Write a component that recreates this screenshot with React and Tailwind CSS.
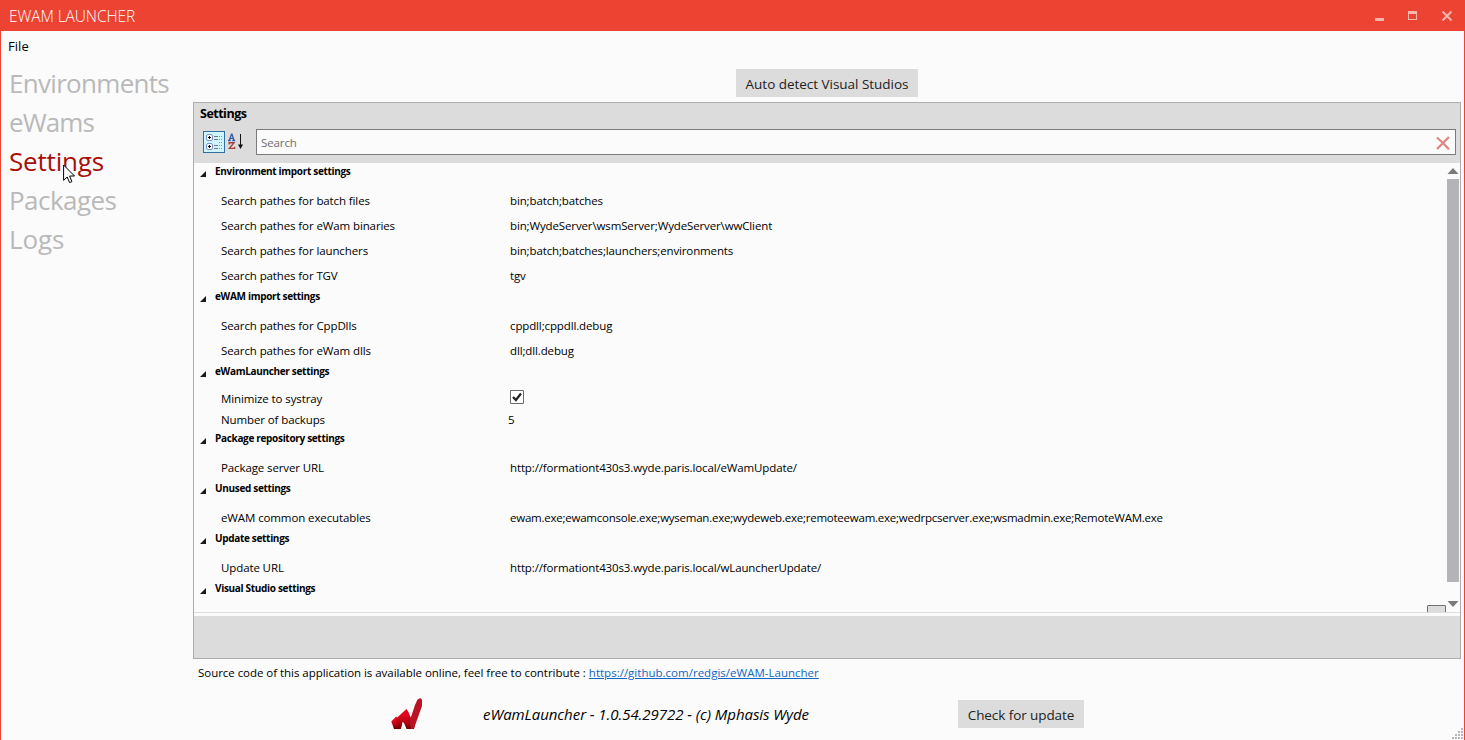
const NAV = [
  { label: 'Environments', track: 'tracking-[-0.7px]' },
  { label: 'eWams', track: 'tracking-[-0.9px]' },
  { label: 'Settings', track: 'tracking-[-0.18px]', active: true },
  { label: 'Packages', track: 'tracking-[-0.55px]' },
  { label: 'Logs', track: 'tracking-[-0.1px]' },
];

const GROUPS = [
  {
    title: 'Environment import settings',
    rows: [
      ['Search pathes for batch files', 'bin;batch;batches'],
      ['Search pathes for eWam binaries', 'bin;WydeServer\\wsmServer;WydeServer\\wwClient'],
      ['Search pathes for launchers', 'bin;batch;batches;launchers;environments'],
      ['Search pathes for TGV', 'tgv'],
    ],
  },
  {
    title: 'eWAM import settings',
    rows: [
      ['Search pathes for CppDlls', 'cppdll;cppdll.debug'],
      ['Search pathes for eWam dlls', 'dll;dll.debug'],
    ],
  },
  {
    title: 'eWamLauncher settings',
    compact: true,
    rows: [
      ['Minimize to systray', true],
      ['Number of backups', '5'],
    ],
  },
  {
    title: 'Package repository settings',
    rows: [['Package server URL', 'http://formationt430s3.wyde.paris.local/eWamUpdate/']],
  },
  {
    title: 'Unused settings',
    rows: [
      [
        'eWAM common executables',
        'ewam.exe;ewamconsole.exe;wyseman.exe;wydeweb.exe;remoteewam.exe;wedrpcserver.exe;wsmadmin.exe;RemoteWAM.exe',
      ],
    ],
  },
  {
    title: 'Update settings',
    rows: [['Update URL', 'http://formationt430s3.wyde.paris.local/wLauncherUpdate/']],
  },
  { title: 'Visual Studio settings', rows: [] },
];

function TitleBar() {
  return (
    <header className="flex h-[31px] shrink-0 items-center justify-between bg-[#ed4333] pl-[9px] pr-[12px] text-white">
      <h1 className="pt-[3px] text-[15.5px] font-light tracking-[-0.08px]">EWAM LAUNCHER</h1>
      <svg width="78" height="12" viewBox="0 0 78 12" className="text-[#f8b4ad]" fill="none">
        <path d="M0 8h9v3H0z" fill="currentColor" />
        <path d="M33 1h9v9h-9zM34 4v5h7V4z" fill="currentColor" fillRule="evenodd" />
        <path d="M67.5 1.5l9 9M76.5 1.5l-9 9" stroke="currentColor" strokeWidth="2" />
      </svg>
    </header>
  );
}

function CategorizedIcon() {
  return (
    <svg width="22" height="22" viewBox="0 0 22 22" fill="none" shapeRendering="crispEdges">
      <path d="M.5.5h21v21H.5z" fill="#cff5fc" stroke="#336f9c" />
      {[3, 12].map((y) => (
        <g key={y}>
          <rect x="3.5" y={y + 0.5} width="6" height="6" rx="1.5" fill="#fff" stroke="#7a93cf" shapeRendering="auto" />
          <path d={`M5 ${y + 3.5}h3M6.5 ${y + 2}v3`} stroke="#000" />
          <path d={`M11 ${y + 2.5}h4M11 ${y + 5.5}h4`} stroke="#777" />
        </g>
      ))}
      <path d="M16 5.5h4M16 8.5h4M16 11.5h4M16 14.5h4M16 17.5h4" stroke="#8f9799" strokeDasharray="1 1" />
    </svg>
  );
}

function SortIcon() {
  return (
    <svg width="16" height="18" viewBox="0 0 16 18" fill="none">
      <path d="M0 7.5h2.8M4.2 7.5h3M1.3 7.2L3.5 1.2h.5L6 7.2M2.2 5.3h3" stroke="#3c5ba5" strokeWidth="1.3" />
      <path d="M1.2 11.4V9.7h4.8L1.4 15.4h5.2v-1.7" stroke="#a2443d" strokeWidth="1.4" />
      <path d="M12.5 1v13" stroke="#111" strokeWidth="1" />
      <path d="M10 11.5h5L12.5 16z" fill="#111" />
    </svg>
  );
}

function Check() {
  return (
    <svg width="14" height="14" viewBox="0 0 14 14" fill="none" className="-mt-[3px]">
      <path d="M.5.5h13v13H.5z" fill="#fff" stroke="#6b6b6b" />
      <path d="M3 7l2.9 3L11 3.5" stroke="#222" strokeWidth="2.2" />
    </svg>
  );
}

function valueTracking(value) {
  if (value === '5') return '-ml-[2px]';
  return value.length > 80 ? 'tracking-[-0.235px]' : '';
}

function Group({ title, rows, compact }) {
  return (
    <section>
      <div className="flex h-[25px] items-start pl-[6px]">
        <svg width="6" height="6" viewBox="0 0 6 6" className="mt-[8px] shrink-0">
          <path d="M6 0v6H0z" fill="#1a1a1a" />
        </svg>
        <h2 className="ml-[9px] whitespace-nowrap text-[10px] font-bold leading-[16px] tracking-[-0.32px]">{title}</h2>
      </div>
      {rows.map(([name, value]) => (
        <div
          key={name}
          className={
            'flex items-center whitespace-nowrap text-[11.5px] tracking-[-0.13px] ' + (compact ? 'h-[21px]' : 'h-[25px]')
          }
        >
          <span className="w-[316px] shrink-0 pl-[27px] tracking-[-0.11px]">{name}</span>
          {value === true ? <Check /> : <span className={valueTracking(value)}>{value}</span>}
        </div>
      ))}
    </section>
  );
}

function PropertyGrid() {
  return (
    <div className="flex h-[557px] w-[1268px] flex-col border border-[#adadad] bg-[#dcdcdc]">
      <div className="flex h-[60px] shrink-0 flex-col">
        <div className="pl-[6px] pt-[2px] text-[12.5px] font-bold leading-[18px] tracking-[-0.5px]">Settings</div>
        <div className="mt-[6px] flex items-center pl-[9px] pr-[4px]">
          <CategorizedIcon />
          <div className="ml-[3px]">
            <SortIcon />
          </div>
          <div className="ml-[12px] flex h-[26px] flex-1 items-center justify-between border border-[#7b7b7b] bg-[#fbfbfb] pl-[4px] pr-[5px]">
            <span className="pt-[2px] text-[11.5px] tracking-[-0.1px] text-[#6e6e6e]">Search</span>
            <svg width="14" height="14" viewBox="0 0 14 14" fill="none" className="mt-[1px]">
              <path d="M1 1.5C5 5 9 9 13 13.2M13 1L1 13" stroke="#e08783" strokeWidth="2.3" />
            </svg>
          </div>
        </div>
      </div>
      <div className="flex h-[449px] shrink-0 bg-[#fbfbfb]">
        <div className="h-full flex-1 overflow-hidden">
          {GROUPS.map((group) => (
            <Group key={group.title} {...group} />
          ))}
          <div className="mr-px flex justify-end">
            <div className="h-[18px] w-[19px] rounded-[1px] border border-[#707070] bg-[#dcdcdc]" />
          </div>
        </div>
        <div className="flex w-[13px] flex-col items-center pr-px pt-[5px]">
          <svg width="12" height="6" viewBox="0 0 12 6">
            <path d="M6 0l5.500 6H.5z" fill="#7a7a7a" />
          </svg>
          <div className="mt-[5px] h-[403px] w-[12px] bg-[#b3b3b8]" />
          <svg width="12" height="6" viewBox="0 0 12 6" className="mt-[19px]">
            <path d="M.5 0h11L6 6z" fill="#7a7a7a" />
          </svg>
        </div>
      </div>
      <div className="h-[4px] shrink-0 border-t border-[#dedede] bg-[#fbfbfb]" />
    </div>
  );
}

function WydeLogo() {
  return (
    <svg width="32" height="32" viewBox="0 0 32 32">
      <defs>
        <linearGradient id="wyde-limb" x1="0" y1="0" x2="0" y2="1">
          <stop offset="0.3" stopColor="#e30620" />
          <stop offset="0.75" stopColor="#a5040f" />
          <stop offset="1" stopColor="#640000" />
        </linearGradient>
      </defs>
      <path d="M.3 23.500L5.200 18.500l3 3 3 5-1.500 4.500H3z" fill="url(#wyde-limb)" />
      <path d="M5.500 20.500L7 18.800 15.500 11l2.200 3.500L20 20l4 7-1 4h-7.500L13 25l-1.500-1L9.500 31H8z" fill="url(#wyde-limb)" />
      <path d="M26.500 1.500L29.500 0 31 2v6l-7.500 21L22 31h-2l-1-6 1-6 4-12z" fill="#bb1326" />
    </svg>
  );
}

function Cursor() {
  return (
    <svg width="12" height="20" viewBox="0 0 12 20" className="absolute left-[54px] top-[22px]">
      <path d="M.6 1v15.3L4.200 13l2.400 5.600 2.300-1L6.600 12h4.900z" fill="#fff" stroke="#000" strokeWidth="1" />
    </svg>
  );
}

function Grip() {
  return (
    <svg width="11" height="11" viewBox="0 0 11 11" fill="#b8b8b8" className="absolute bottom-[1px] right-[2px]">
      <path d="M9 0h2v2H9zM6 3h2v2H6zM9 3h2v2H9zM3 6h2v2H3zM6 6h2v2H6zM9 6h2v2H9zM0 9h2v2H0zM3 9h2v2H3zM6 9h2v2H6zM9 9h2v2H9z" />
    </svg>
  );
}

export default function App() {
  return (
    <div className="relative flex h-[740px] w-[1465px] flex-col overflow-hidden bg-[#ed4333] font-['Open_Sans','Noto_Sans',sans-serif] text-black">
      <TitleBar />
      <div className="mx-px flex flex-1 flex-col bg-[#fbfbfb]">
        <div className="h-[32px] pl-[7px] text-[13px] leading-[31px] tracking-[0.05px]">File</div>
        <div className="flex">
          <nav className="w-[192px] shrink-0 pl-[8px] pt-px">
            {NAV.map(({ label, track, active }) => (
              <div
                key={label}
                className={`relative h-[39px] text-[26px] leading-[39px] ${track} ${active ? 'text-[#a80f08]' : 'text-[#b9b9b9]'}`}
              >
                {label}
                {active && <Cursor />}
              </div>
            ))}
          </nav>
          <main className="flex flex-col">
            <div className="flex h-[39px] justify-center pt-[6px]">
              <button className="h-[28px] w-[182px] bg-[#dcdcdc] pt-[3px] text-[13.5px] tracking-[-0.03px] text-[#222]">
                Auto detect Visual Studios
              </button>
            </div>
            <PropertyGrid />
            <p className="mt-[5px] whitespace-nowrap pl-[5px] text-[11.5px] leading-[18px] tracking-[-0.04px]">
              Source code of this application is available online, feel free to contribute :{' '}
              <a className="tracking-[0.01px] text-[#0f66c2] underline">https://github.com/redgis/eWAM-Launcher</a>
            </p>
            <footer className="mt-[16px] flex items-center pl-[198px]">
              <WydeLogo />
              <span className="ml-[60px] w-[475px] whitespace-nowrap text-[15px] italic tracking-[-0.05px]">
                eWamLauncher - 1.0.54.29722 - (c) Mphasis Wyde
              </span>
              <button className="h-[28px] w-[126px] bg-[#dcdcdc] pt-[3px] text-[13.5px] tracking-[-0.08px] text-[#222]">
                Check for update
              </button>
            </footer>
          </main>
        </div>
      </div>
      <Grip />
    </div>
  );
}
